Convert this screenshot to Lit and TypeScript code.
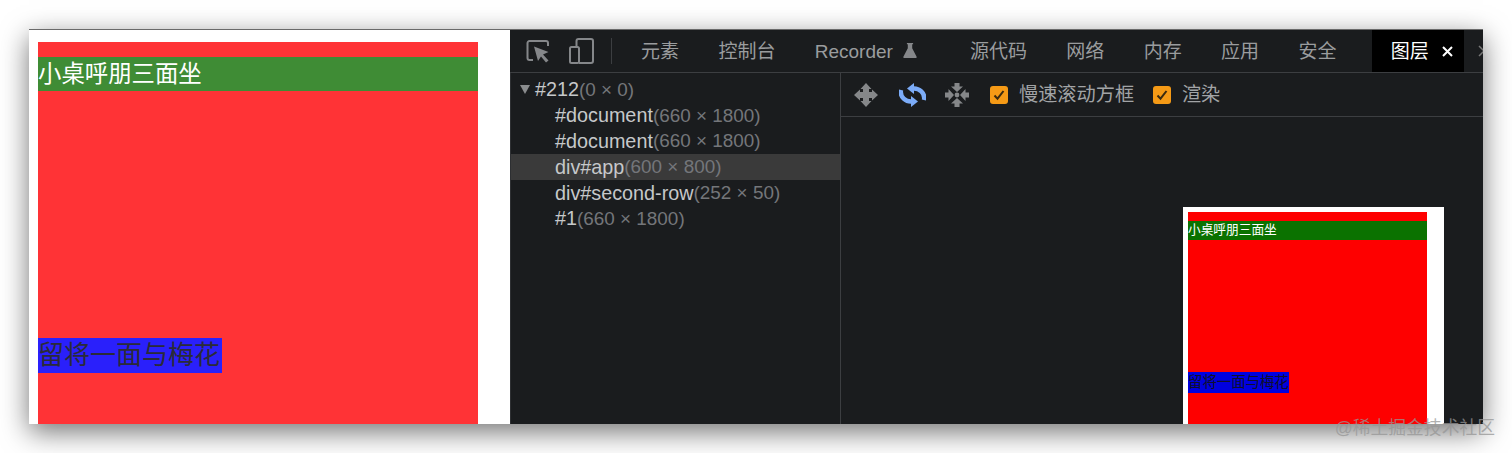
import { css, html, LitElement, svg } from 'lit';
import { customElement } from 'lit/decorators.js';

const TABS = ['元素', '控制台', 'Recorder', '源代码', '网络', '内存', '应用', '安全'];

const ROWS = [
  { name: '#document', size: '(660 × 1800)' },
  { name: '#document', size: '(660 × 1800)' },
  { name: 'div#app', size: '(600 × 800)', selected: true },
  { name: 'div#second-row', size: '(252 × 50)' },
  { name: '#1', size: '(660 × 1800)' },
];

const FIRST_LINE = '小桌呼朋三面坐';
const SECOND_LINE = '留将一面与梅花';

// four-way arrow, used by the pan tool
const panIcon = svg`
  <path d="M12 0L17.500 6H15V9H18V6.500L24 12L18 17.500V15H15V18H17.500L12 24L6.500 18H9V15H6V17.500L0 12L6 6.500V9H9V6H6.500Z" fill="#858789"/>
`;

// two arrows chasing each other, the rotate tool
const rotateIcon = svg`
  <g fill="none" stroke="#7cacf8" stroke-width="4.500">
    <path d="M25 17C26.500 10 20 5 14 5.500"/>
    <path d="M2 7C.5 14 7 19 13 18.500"/>
  </g>
  <path d="M15 0V11L8 5.500z" fill="#7cacf8"/>
  <path d="M12 13V24L19 18.500z" fill="#7cacf8"/>
`;

// arrows pointing in at a dot, the reset tool
const resetIcon = svg`
  <g fill="#858789">
    <path d="M9.500 0h5v3.500H18L12 9 6 3.500h3.500z"/>
    <path d="M9.500 24h5v-3.500H18L12 15 6 20.500h3.500z"/>
    <path d="M0 9.500v5h3.500V18L9 12 3.500 6v3.500z"/>
    <path d="M24 9.500v5h-3.500V18L15 12l5.500-6v3.500z"/>
    <circle cx="12" cy="12" r="2.400"/>
  </g>
`;

@customElement('app-root')
export class AppRoot extends LitElement {
  static override styles = css`
    :host {
      display: block;
      width: 1512px;
      height: 453px;
      overflow: hidden;
      background: #fff;
      position: relative;
      font-family: 'Liberation Sans', 'Noto Sans CJK SC', sans-serif;
    }
    .window {
      display: flex;
      height: 395px;
      margin: 29px 29px 0;
      overflow: hidden;
      border-top: 1px solid #6a6a6a;
      box-sizing: border-box;
    }
    .shadow {
      position: absolute;
      left: 29px;
      top: 29px;
      width: 1454px;
      height: 395px;
      box-shadow: 0 8px 26px rgba(0, 0, 0, 0.55);
    }
    .page {
      width: 481px;
      flex: none;
      box-sizing: border-box;
      padding: 12px 0 0 9px;
      background: #fff;
    }
    .page .sheet {
      width: 439.500px;
      height: 100%;
      padding-top: 15px;
      box-sizing: border-box;
      background: #ff3336;
    }
    .page .green {
      height: 34px;
      line-height: 34px;
      font-size: 23.400px;
      background: #3f8c35;
      color: #fff;
      white-space: nowrap;
    }
    .page .blue {
      width: 184px;
      height: 35px;
      line-height: 35px;
      font-size: 26px;
      margin-top: 247px;
      background: #2a20fb;
      color: #2b2b38;
      white-space: nowrap;
    }
    .devtools {
      flex: 1;
      min-width: 0;
      display: flex;
      flex-direction: column;
      background: #1a1c1e;
    }
    .topbar {
      display: flex;
      align-items: center;
      height: 42px;
      flex: none;
      border-bottom: 1px solid #3c3e41;
      white-space: nowrap;
    }
    .tool {
      display: block;
      flex: none;
    }
    .inspect {
      margin-left: 16px;
    }
    .device {
      margin-left: 19px;
    }
    .divider {
      flex: none;
      width: 1px;
      height: 26px;
      margin: 0 9.300px 0 17px;
      background: #3c3e41;
    }
    .tab {
      flex: none;
      display: flex;
      align-items: center;
      height: 100%;
      box-sizing: border-box;
      padding: 0 19.700px 3px;
      font-size: 19px;
      color: #9a9c9e;
    }
    .tab.recorder {
      padding: 1px 57.300px 0 19.700px;
      position: relative;
    }
    .flask {
      position: absolute;
      left: 108px;
      top: 13px;
    }
    .tab.active {
      background: #000;
      color: #fff;
      padding: 0 12px 3px 19px;
      margin-left: 15.700px;
      width: 92px;
      gap: 13px;
    }
    .close {
      flex: none;
      margin-top: 3px;
    }
    .more {
      flex: none;
      display: block;
      margin-left: 14px;
    }
    .body {
      flex: 1;
      min-height: 0;
      display: flex;
    }
    .tree {
      width: 331px;
      flex: none;
      box-sizing: border-box;
      padding-top: 4px;
      border-left: 1px solid #2e3033;
      border-right: 1px solid #3c3e41;
      font-size: 19.800px;
    }
    .row {
      display: flex;
      align-items: center;
      height: 25.800px;
      padding-left: 44px;
      color: #c6c8ca;
      white-space: nowrap;
    }
    .row.root {
      padding-left: 9px;
    }
    .row.selected {
      background: #3a3a3a;
    }
    .row .dim {
      color: #74767a;
      font-size: 18.900px;
    }
    .caret {
      width: 0;
      height: 0;
      margin-right: 5px;
      border-left: 5px solid transparent;
      border-right: 5px solid transparent;
      border-top: 9px solid #8a8c8e;
    }
    .view {
      flex: 1;
      min-width: 0;
      display: flex;
      flex-direction: column;
    }
    .viewbar {
      display: flex;
      align-items: center;
      height: 43px;
      flex: none;
      padding-left: 13px;
      border-bottom: 1px solid #3c3e41;
      font-size: 19.200px;
      color: #a2a4a6;
      white-space: nowrap;
    }
    .viewbar .icon {
      flex: none;
      margin-right: 21px;
    }
    .viewbar .icon.rotate {
      margin-right: 19px;
    }
    .check {
      flex: none;
      width: 18px;
      height: 18px;
      border-radius: 3px;
      background: #f59a16;
      display: flex;
      align-items: center;
      justify-content: center;
      margin-right: 11px;
    }
    .check + span {
      margin-right: 18.800px;
      padding-bottom: 3px;
    }
    .canvas {
      flex: 1;
      min-height: 0;
      overflow: hidden;
      padding: 90px 0 0 342px;
    }
    .layer {
      width: 261px;
      height: 300px;
      padding: 5px 0 0 5px;
      box-sizing: border-box;
      background: #fff;
    }
    .layer .sheet {
      width: 239px;
      height: 100%;
      padding-top: 9px;
      box-sizing: border-box;
      background: #fe0000;
    }
    .layer .green {
      height: 19px;
      line-height: 19px;
      font-size: 12.700px;
      background: #0b7200;
      color: #fff;
      white-space: nowrap;
    }
    .layer .blue {
      width: 101px;
      height: 21px;
      line-height: 21px;
      font-size: 14.400px;
      margin-top: 132px;
      background: #0000e0;
      color: #10102a;
      white-space: nowrap;
    }
    .watermark {
      position: absolute;
      right: 17px;
      top: 417px;
      font-size: 17.800px;
      line-height: 22px;
      color: rgba(150, 150, 150, 0.75);
      white-space: nowrap;
    }
  `;

  private _checkbox() {
    return html`<span class="check">
      <svg width="12" height="12" viewBox="0 0 12 12">
        <path d="M1.500 6.500l3 3.200 6-7.700" fill="none" stroke="#3a2a10" stroke-width="2"/>
      </svg>
    </span>`;
  }

  override render() {
    return html`
      <div class="shadow"></div>
      <div class="window">
        <div class="page">
          <div class="sheet">
            <div class="green">${FIRST_LINE}</div>
            <div class="blue">${SECOND_LINE}</div>
          </div>
        </div>
        <div class="devtools">
          <div class="topbar">
            <svg class="tool inspect" width="24" height="24" viewBox="0 0 24 24" fill="none">
              <path d="M7 21H3.500A2 2 0 0 1 1.500 19V4A2 2 0 0 1 3.500 2H20A2 2 0 0 1 22 4V7" stroke="#85878a" stroke-width="2"/>
              <path d="M8 7.500l14.500 5.500-5.500 2.500 5.500 6-2.500 2-5-6-3 4.500z" fill="#85878a"/>
            </svg>
            <svg class="tool device" width="25" height="26" viewBox="0 0 25 26" fill="none" stroke="#85878a" stroke-width="2">
              <path d="M7.500 9V3A2 2 0 0 1 9.500 1H22A2 2 0 0 1 24 3V23A2 2 0 0 1 22 25H10"/>
              <rect x="1" y="9" width="9" height="16" rx="1.500"/>
            </svg>
            <span class="divider"></span>
            ${TABS.map((tab) =>
              tab === 'Recorder'
                ? html`<span class="tab recorder">${tab}
                    <svg class="flask" width="14" height="15" viewBox="0 0 15 17">
                      <path d="M4 0h7v1.500h-1V6l5 9.500a1 1 0 0 1-1 1.500H1a1 1 0 0 1-1-1.500L5 6V1.500H4z" fill="#85878a"/>
                    </svg>
                  </span>`
                : html`<span class="tab">${tab}</span>`
            )}
            <span class="tab active">
              图层
              <svg class="close" width="11" height="11" viewBox="0 0 11 11">
                <path d="M1 1l9 9M10 1l-9 9" stroke="#fff" stroke-width="2"/>
              </svg>
            </span>
            <svg class="more" width="14" height="14" viewBox="0 0 14 14" fill="none" stroke="#777" stroke-width="1.500">
              <path d="M1 2l5 5-5 5M7 2l5 5-5 5"/>
            </svg>
          </div>
          <div class="body">
            <div class="tree">
              <div class="row root">
                <span class="caret"></span>#212<span class="dim">(0 × 0)</span>
              </div>
              ${ROWS.map(
                (row) => html`<div class="row ${row.selected ? 'selected' : ''}">
                  ${row.name}<span class="dim">${row.size}</span>
                </div>`
              )}
            </div>
            <div class="view">
              <div class="viewbar">
                <svg class="icon" width="24" height="24" viewBox="0 0 24 24">${panIcon}</svg>
                <svg class="icon rotate" width="27" height="24" viewBox="0 0 27 24">${rotateIcon}</svg>
                <svg class="icon" width="24" height="24" viewBox="0 0 24 24">${resetIcon}</svg>
                ${this._checkbox()}<span>慢速滚动方框</span>
                ${this._checkbox()}<span>渲染</span>
              </div>
              <div class="canvas">
                <div class="layer">
                  <div class="sheet">
                    <div class="green">${FIRST_LINE}</div>
                    <div class="blue">${SECOND_LINE}</div>
                  </div>
                </div>
              </div>
            </div>
          </div>
        </div>
      </div>
      <div class="watermark">@稀土掘金技术社区</div>
    `;
  }
}
